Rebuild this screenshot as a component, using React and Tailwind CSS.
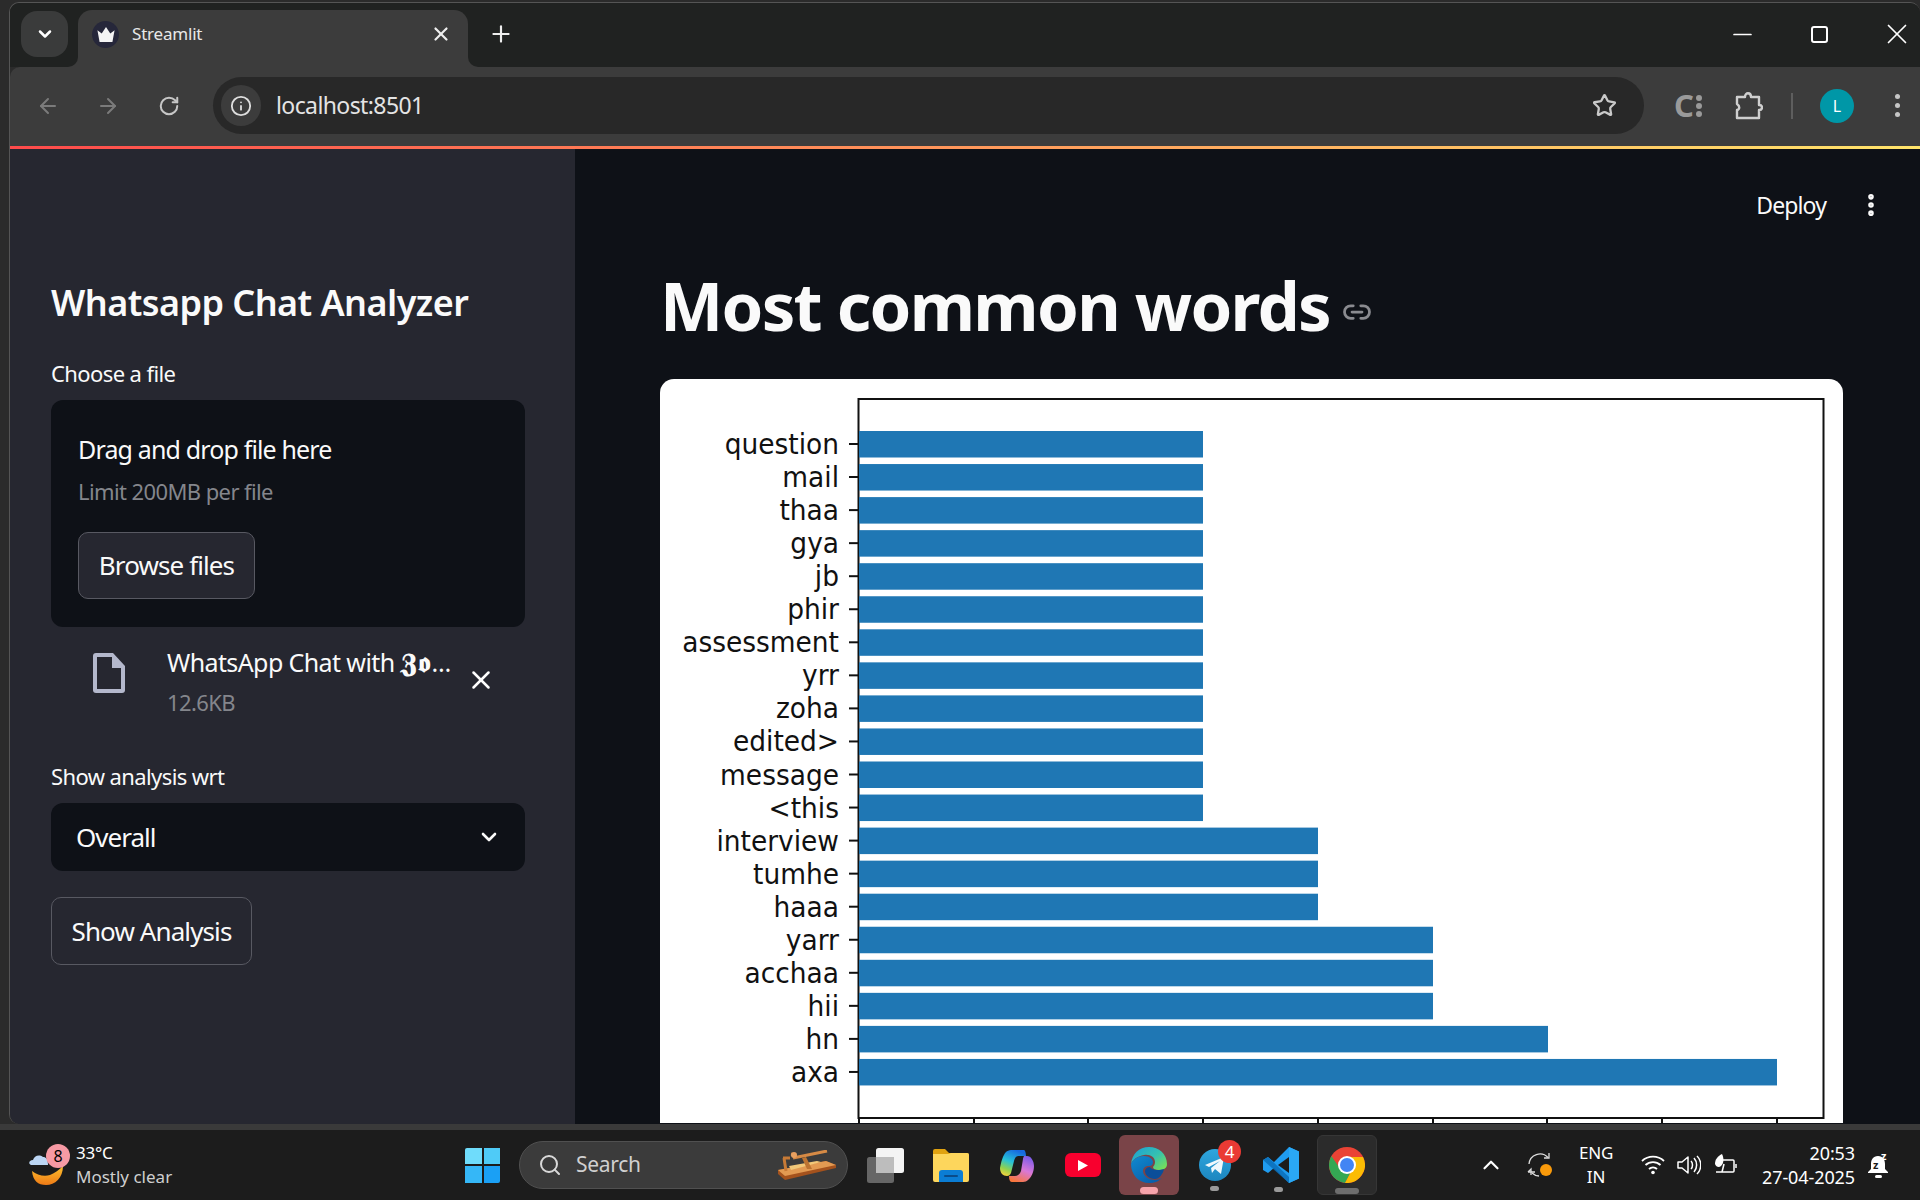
import { ArrowLeft, ArrowRight, RotateCw, Info, Star, X, Plus, ChevronDown, Minus, Link2, EllipsisVertical, Search, ChevronUp } from "lucide-react";

const words = [
  ["question", 344], ["mail", 344], ["thaa", 344], ["gya", 344], ["jb", 344],
  ["phir", 344], ["assessment", 344], ["yrr", 344], ["zoha", 344], ["edited>", 344],
  ["message", 344], ["<this", 344], ["interview", 459], ["tumhe", 459], ["haaa", 459],
  ["yarr", 574], ["acchaa", 574], ["hii", 574], ["hn", 689], ["axa", 918],
];

const Chart = () => (
  <svg width="1183" height="744" className="block">
    <rect x="198.5" y="20" width="965" height="719" fill="none" stroke="#111" strokeWidth="2" />
    {words.map(([word, w], i) => {
      const y = 52 + i * 33.05;
      return (
        <g key={word}>
          <rect x="199" y={y} width={w} height="26.5" fill="#1f77b4" />
          <line x1="189" x2="198" y1={y + 13} y2={y + 13} stroke="#111" strokeWidth="2" />
          <text
            transform={`translate(179 ${y + 23}) scale(0.945 1)`}
            textAnchor="end"
            fontFamily="DejaVu Sans"
            fontSize="28"
            fill="#111"
          >
            {word}
          </text>
        </g>
      );
    })}
    {[199, 314, 428, 543, 658, 773, 887, 1002, 1117].map((x) => (
      <line key={x} x1={x} x2={x} y1="739" y2="744" stroke="#111" strokeWidth="2" />
    ))}
  </svg>
);

const TabStrip = () => (
  <div className="h-[64px] flex items-start bg-[#202221] relative shrink-0">
    <div className="mt-[8px] ml-[11px] w-[47px] h-[46px] rounded-2xl bg-[#3a3b3b] flex items-center justify-center">
      <ChevronDown size={20} strokeWidth={3} color="#fff" />
    </div>
    <div className="mt-[7px] ml-[10px] w-[390px] h-[57px] rounded-t-[14px] bg-[#3c3c3c] flex items-center pl-[14px] pr-[18px] relative">
      <span className="absolute -left-[10px] bottom-0 w-[10px] h-[10px] bg-[#3c3c3c]">
        <span className="block w-full h-full bg-[#202221] rounded-br-[10px]" />
      </span>
      <span className="absolute -right-[10px] bottom-0 w-[10px] h-[10px] bg-[#3c3c3c]">
        <span className="block w-full h-full bg-[#202221] rounded-bl-[10px]" />
      </span>
      <div className="-mt-[9px] w-[27px] h-[27px] rounded-full bg-[#26273a] flex items-center justify-center">
        <svg width="20" height="15" viewBox="0 0 18 14">
          <path d="M1 3l4 3 4-6 4 6 4-3-2 11H3z" fill="#f4f4f4" />
        </svg>
      </div>
      <span className="-mt-[9px] ml-[13px] text-[17px] text-[#e8e8e8] tracking-[-0.2px] flex-1">Streamlit</span>
      <X size={22} strokeWidth={2.4} color="#eee" className="-mt-[9px] -mr-[2px]" />
    </div>
    <Plus size={26} strokeWidth={2} color="#eee" className="ml-[20px] mt-[18px]" />
    <div className="ml-auto flex items-center h-[34px] mt-[14px] mr-[6px]">
      <Minus size={29} strokeWidth={1.4} color="#fff" />
      <div className="ml-[54px] w-[17px] h-[17px] border-2 border-white rounded-[3px]" />
      <X size={34} strokeWidth={1.2} color="#fff" className="ml-[52px]" />
    </div>
  </div>
);

const Toolbar = () => (
  <div className="h-[79px] bg-[#3c3c3c] rounded-tl-[10px] flex items-center pb-[2px] shrink-0">
    <ArrowLeft size={24} color="#7b7b7b" className="ml-[26px]" />
    <ArrowRight size={24} color="#7b7b7b" className="ml-[36px]" />
    <RotateCw size={22} strokeWidth={2.2} color="#c6c6c6" className="ml-[38px]" />
    <div className="ml-[33px] w-[1431px] h-[57px] rounded-full bg-[#282828] flex items-center pl-[8px] pr-[27px]">
      <div className="w-[40px] h-[41px] rounded-full bg-[#3c3c3c] flex items-center justify-center">
        <Info size={22} color="#ddd" />
      </div>
      <span className="ml-[15px] text-[23px] text-[#e4e4e4] tracking-[-0.6px] flex-1">localhost:8501</span>
      <Star size={25} strokeWidth={2.2} color="#c9c9c9" />
    </div>
    <span className="ml-[30px] text-[31px] font-bold text-[#9a9a9a] leading-none">C</span>
    <div className="ml-[2px] flex flex-col gap-[2px]">
      <span className="w-[6px] h-[6px] rounded-full bg-[#9a9a9a]" />
      <span className="w-[6px] h-[6px] rounded-full bg-[#9a9a9a]" />
      <span className="w-[6px] h-[6px] rounded-full bg-[#9a9a9a]" />
    </div>
    <svg width="28" height="28" viewBox="0 0 28 28" className="ml-[33px]" fill="none" stroke="#cfcfcf" strokeWidth="2.4">
      <path d="M2 5h8c0-5 6-5 6 0h8v8c4 0 4 5 0 5v8H2v-8c3-1 3-4 0-6z" strokeLinejoin="round" />
    </svg>
    <span className="ml-[28px] w-[2px] h-[26px] bg-[#5e5e5e]" />
    <div className="ml-[27px] w-[34px] h-[34px] rounded-full bg-[#0097a7] flex items-center justify-center text-[16px] text-white">L</div>
    <div className="ml-[41px] flex flex-col gap-[4px]">
      <span className="w-[5px] h-[5px] rounded-full bg-[#c6c6c6]" />
      <span className="w-[5px] h-[5px] rounded-full bg-[#c6c6c6]" />
      <span className="w-[5px] h-[5px] rounded-full bg-[#c6c6c6]" />
    </div>
  </div>
);

const Sidebar = () => (
  <div className="w-[565px] h-full bg-[#262730] shrink-0 pl-[41px] pr-[50px] pt-[131px] text-[#fafafa]">
    <h2 className="text-[36px] font-semibold leading-[46px] tracking-[-0.55px]">Whatsapp Chat Analyzer</h2>
    <p className="mt-[32px] text-[22px] leading-[30px] tracking-[-0.6px]">Choose a file</p>
    <div className="mt-[12px] h-[227px] rounded-xl bg-[#0e1117] pl-[27px] pt-[30px]">
      <p className="text-[25px] leading-[38px] tracking-[-0.85px]">Drag and drop file here</p>
      <p className="mt-[8px] text-[22px] leading-[30px] text-[#84868c] tracking-[-0.6px]">Limit 200MB per file</p>
      <button className="mt-[26px] w-[177px] h-[67px] rounded-[10px] border border-[#585962] bg-[#262730] text-[26px] tracking-[-0.9px]">Browse files</button>
    </div>
    <div className="mt-[18px] h-[88px] flex items-start">
      <svg width="32" height="40" viewBox="0 0 32 40" className="ml-[42px] mt-[8px]">
        <path d="M3 0h17l12 13v24a3 3 0 0 1-3 3H3a3 3 0 0 1-3-3V3a3 3 0 0 1 3-3z" fill="#b4b8cc" />
        <path d="M4 4h15v11h9v21H4z" fill="#262730" />
      </svg>
      <div className="ml-[42px] w-[298px]">
        <p className="text-[25px] leading-[34px] whitespace-nowrap tracking-[-0.6px]">
          WhatsApp Chat with <span className="font-bold text-[27px] tracking-[1px]">𝖅𝖔</span><span className="tracking-[2.5px]">…</span>
        </p>
        <p className="mt-[8px] text-[22px] leading-[30px] text-[#84868c] tracking-[-0.6px]">12.6KB</p>
      </div>
      <X size={30} strokeWidth={2} color="#fff" className="mt-[20px] ml-[1px]" />
    </div>
    <p className="mt-[28px] text-[22px] leading-[30px] tracking-[-0.6px]">Show analysis wrt</p>
    <div className="mt-[12px] h-[68px] rounded-xl bg-[#0e1117] flex items-center justify-between pl-[25px] pr-[24px]">
      <span className="text-[26px] tracking-[-1px]">Overall</span>
      <ChevronDown size={24} strokeWidth={2.6} />
    </div>
    <button className="mt-[26px] w-[201px] h-[68px] rounded-[10px] border border-[#585962] text-[26px] tracking-[-0.9px]">Show Analysis</button>
  </div>
);

const Main = () => (
  <div className="flex-1 h-full bg-[#0e1117] overflow-hidden text-[#fafafa]">
    <div className="h-[83px] pt-[41px] flex justify-end pr-[35px]">
      <div className="h-[30px] flex items-center">
        <span className="text-[23px] leading-[30px] tracking-[-0.9px]">Deploy</span>
        <EllipsisVertical size={28} strokeWidth={2.8} className="ml-[31px]" />
      </div>
    </div>
    <div className="ml-[85px] flex items-center h-[147px]">
      <h1 className="text-[67px] font-bold leading-none tracking-[-1.7px]">Most common words</h1>
      <Link2 size={30} strokeWidth={2.2} color="#8a8b90" className="ml-[12px] mt-[12px]" />
    </div>
    <div className="ml-[85px] w-[1183px] bg-white rounded-t-[14px] overflow-hidden">
      <Chart />
    </div>
  </div>
);

const TaskIcons = () => (
  <div className="flex items-center h-[70px]">
    <svg width="37" height="35" viewBox="0 0 37 35" className="ml-[19px]">
      <rect x="0" y="9" width="27" height="26" rx="2.5" fill="#666" />
      <rect x="9" y="0" width="28" height="25" rx="2.5" fill="#f4f4f4" />
      <rect x="9" y="9" width="18" height="16" fill="#bdbdbd" />
    </svg>
    <svg width="36" height="33" viewBox="0 0 36 33" className="ml-[29px]">
      <path d="M0 2a2 2 0 0 1 2-2h10l4 4h18a2 2 0 0 1 2 2v6H0z" fill="#e0a210" />
      <path d="M0 5h15l3-1h16a2 2 0 0 1 2 2v25a2 2 0 0 1-2 2H2a2 2 0 0 1-2-2z" fill="#fdd65c" />
      <path d="M6 33V24a3 3 0 0 1 3-3h18a3 3 0 0 1 3 3v9z" fill="#0b7dd4" />
      <rect x="11" y="26" width="14" height="2" rx="1" fill="#0a4c8a" />
    </svg>
    <svg width="34" height="33" viewBox="0 0 34 33" className="ml-[31px]">
      <defs>
        <linearGradient id="copA" x1="0.6" y1="0" x2="0.2" y2="1">
          <stop offset="0" stopColor="#1769e0" />
          <stop offset="0.45" stopColor="#26c2d8" />
          <stop offset="0.75" stopColor="#8fd14f" />
          <stop offset="1" stopColor="#f7d13c" />
        </linearGradient>
        <linearGradient id="copB" x1="0.7" y1="0" x2="0.3" y2="1">
          <stop offset="0" stopColor="#7c5ce8" />
          <stop offset="0.5" stopColor="#d878d8" />
          <stop offset="1" stopColor="#f8763c" />
        </linearGradient>
      </defs>
      <path d="M11 1h13c1 0 2 3 2 6H19c-3 0-4 2-5 5l-3 12c-1 2-2 3-4 3-4 0-7-3-7-8 1-6 3-13 6-16 1-1 3-2 5-2z" fill="url(#copA)" />
      <path d="M24 7h3c4 0 7 5 7 10 0 6-3 12-6 14-1 1-3 2-5 2H12c-2 0-3-2-3-6h6c3 0 5-2 6-5l2-12c0-1 1-3 1-3z" fill="url(#copB)" />
    </svg>
    <div className="ml-[31px] w-[36px] h-[24px] rounded-[6px] bg-[#f8002e] flex items-center justify-center">
      <svg width="10" height="11" viewBox="0 0 10 11"><path d="M0 0l10 5.500-10 5.500z" fill="#fff" /></svg>
    </div>
    <div className="ml-[18px] w-[60px] h-[60px] rounded-[6px] bg-[#7a4448] relative flex items-center justify-center">
      <svg width="36" height="36" viewBox="0 0 36 36">
        <defs>
          <linearGradient id="edgeA" x1="0" y1="0" x2="1" y2="0.8">
            <stop offset="0" stopColor="#1a9ed8" />
            <stop offset="0.6" stopColor="#35c1b0" />
            <stop offset="1" stopColor="#74dc5c" />
          </linearGradient>
          <linearGradient id="edgeB" x1="0" y1="0" x2="0.8" y2="1">
            <stop offset="0" stopColor="#0f8ad0" />
            <stop offset="1" stopColor="#0a5ca8" />
          </linearGradient>
        </defs>
        <path d="M0 17C1 7 8 0 18 0c10 0 18 7 18 17 0 4-3 6-8 6-4 0-6-1-6-3 1-1 2-3 2-5 0-5-5-8-11-7C7 9 2 12 0 17z" fill="url(#edgeA)" />
        <path d="M0 17c2-5 7-8 13-8 5 0 9 3 9 6 0 2-1 4-4 4-4 0-6 2-6 5 0 5 6 9 12 9 3 0 5-1 7-2-3 3-7 5-13 5C8 36 0 28 0 17z" fill="url(#edgeB)" />
        <path d="M14 24c0-2 2-4 5-4 1 1 2 3 9 3 2 0 4-1 5-1-1 5-5 10-9 10-6 0-10-4-10-8z" fill="#0a4e9a" />
      </svg>
      <span className="absolute bottom-[1px] left-[21px] w-[18px] h-[7px] rounded-full bg-[#f7a3ab]" />
    </div>
    <div className="ml-[20px] w-[32px] h-[31px] relative -mt-[1px]">
      <div className="w-[32px] h-[32px] rounded-full bg-[linear-gradient(180deg,#2fa6de,#1c86bf)] flex items-center justify-center">
        <svg width="20" height="17" viewBox="0 0 20 17"><path d="M0 8L19 0 16 17 10 12 7 16 6 11 15 4 4 10z" fill="#f0f8fc" /></svg>
      </div>
      <span className="absolute left-[19px] -top-[9px] w-[23px] h-[23px] rounded-full bg-[#ea3a34] text-[17px] text-white flex items-center justify-center">4</span>
      <span className="absolute left-[11px] top-[37px] w-[9px] h-[5px] rounded-full bg-[#9a9a9a]" />
    </div>
    <div className="ml-[32px] w-[36px] h-[36px] relative">
      <svg width="36" height="36" viewBox="0 0 36 36">
        <path d="M26 0l10 4.500v27L26 36 11 21l-6 5-5-3v-10l5-3 6 5z" fill="#1f9cf0" />
        <path d="M26 0v36l10-4.500v-27z" fill="#2aa8f5" />
        <path d="M26 10L15 18l11 8z" fill="#1c1c1c" />
        <path d="M0 13l5-3 21 20v6z" fill="#0a6fb8" fillOpacity="0.85" />
      </svg>
      <span className="absolute left-[11px] top-[40px] w-[9px] h-[5px] rounded-full bg-[#9a9a9a]" />
    </div>
    <div className="ml-[18px] w-[60px] h-[60px] rounded-[6px] bg-[#2b2b2b] border border-[#363636] relative flex items-center justify-center">
      <svg width="36" height="36" viewBox="0 0 36 36">
        <circle cx="18" cy="18" r="18" fill="#ea4335" />
        <path d="M2.400 9A18 18 0 0 0 16 35.900L24 21z" fill="#34a853" />
        <path d="M18 10h16a18 18 0 0 1-18 25.900L24 21z" fill="#fbbc04" />
        <path d="M2.400 9L12 23l6-13z" fill="#ea4335" />
        <circle cx="18" cy="18" r="9" fill="#fff" />
        <circle cx="18" cy="18" r="7" fill="#4285f4" />
      </svg>
      <span className="absolute bottom-[0px] left-[17px] w-[24px] h-[6px] rounded-full bg-[#6e6e6e]" />
    </div>
  </div>
);

const Taskbar = () => (
  <div className="h-[70px] bg-[#1c1c1c] flex items-center shrink-0 relative">
    <div className="ml-[29px] w-[40px] h-[42px] relative">
      <svg width="40" height="42" viewBox="0 0 40 42">
        <defs>
          <linearGradient id="moon" x1="0" y1="0" x2="0" y2="1">
            <stop offset="0" stopColor="#fcc02e" />
            <stop offset="1" stopColor="#ee7a16" />
          </linearGradient>
        </defs>
        <path d="M34 22c0 12-8 19-17 19-8 0-13-4-14-14 5 4 12 6 18 4 5-2 9-5 13-9z" fill="url(#moon)" />
        <path d="M2 21c-3-1-2-5 2-5 1-4 6-6 10-3 3 0 5 2 5 8z" fill="#bcd6f4" />
      </svg>
      <span className="absolute left-[17px] top-0 w-[24px] h-[24px] rounded-full bg-[#f79aa4] text-[16px] text-black flex items-center justify-center">8</span>
    </div>
    <div className="ml-[7px] w-[389px] text-white">
      <p className="text-[17px] leading-[24px] tracking-[-0.2px]">33°C</p>
      <p className="text-[17px] leading-[24px] text-[#cfcfcf] tracking-[0px]">Mostly clear</p>
    </div>
    <div className="grid grid-cols-2 gap-[2px] w-[35px] h-[35px]">
      <span className="bg-[#6fdcfb] rounded-tl-[2px]" />
      <span className="bg-[#4fcbf7]" />
      <span className="bg-[#35b7f7]" />
      <span className="bg-[#1aa0f5] rounded-br-[2px]" />
    </div>
    <div className="ml-[19px] w-[329px] h-[48px] rounded-full bg-[#3b3b3b] border border-[#505050] flex items-center pl-[18px] pr-[10px]">
      <Search size={24} strokeWidth={2} color="#d9d9d9" />
      <span className="ml-[14px] text-[21px] text-[#d0d0d0] tracking-[-0.3px] flex-1">Search</span>
      <svg width="60" height="30" viewBox="0 0 60 30">
        <path d="M1 20l48-9 10 4v3L8 30 1 24z" fill="#a4521d" />
        <path d="M1 20l48-9 10 4L8 26z" fill="#e29a52" />
        <path d="M14 20l30-8-4-1-28 5z" fill="#f2c879" />
        <path d="M6 8h7M7 8l2 13M14 4l5 1" stroke="#c77a36" strokeWidth="3" fill="none" />
        <path d="M16 8L50 1" stroke="#d68a45" strokeWidth="3" fill="none" />
        <circle cx="17" cy="5" r="3" fill="#e8a060" />
        <path d="M25 8l5 11h5L29 7z" fill="#bd7432" />
      </svg>
    </div>
    <TaskIcons />
    <ChevronUp size={26} strokeWidth={2} color="#fff" className="ml-[101px]" />
    <svg width="26" height="26" viewBox="0 0 26 26" fill="none" stroke="#ddd" strokeWidth="1.300" className="ml-[23px]">
      <path d="M2 12a11 11 0 0 1 19-6.500" />
      <path d="M22 1v5h-5" />
      <path d="M1 20l3-3v6M1 20h7" />
      <path d="M5 21a11 11 0 0 0 7 3" />
      <circle cx="19" cy="18" r="6" fill="#f99a0b" stroke="none" />
    </svg>
    <div className="ml-[23px] w-[40px] text-center text-[17px] leading-[24px] text-white tracking-[-0.2px]">
      <p>ENG</p>
      <p>IN</p>
    </div>
    <svg width="24" height="20" viewBox="0 0 24 20" fill="none" stroke="#fff" strokeWidth="1.800" className="ml-[25px]">
      <path d="M1 6a16 16 0 0 1 22 0" />
      <path d="M4.500 10a11 11 0 0 1 15 0" />
      <path d="M8 14a6 6 0 0 1 8 0" />
      <circle cx="12" cy="17.500" r="1.800" fill="#fff" stroke="none" />
    </svg>
    <svg width="24" height="20" viewBox="0 0 24 20" fill="none" stroke="#fff" strokeWidth="1.500" className="ml-[12px]">
      <path d="M1 7h4l6-5v16l-6-5H1z" strokeLinejoin="round" />
      <path d="M14 6c2 2 2 6 0 8" />
      <path d="M17 3c3.500 4 3.500 10 0 14" />
      <path d="M20 1c5 5 5 13 0 18" />
    </svg>
    <svg width="24" height="24" viewBox="0 0 24 24" fill="none" stroke="#fff" strokeWidth="1.500" className="ml-[12px]">
      <path d="M9 7h11a1 1 0 0 1 1 1v10a1 1 0 0 1-1 1H3" />
      <path d="M23 11v4" />
      <path d="M2 11c0-5 3-8 7-10 2 4 2 9-1 12-2 2-5 1-6-2z" fill="#fff" stroke="none" />
      <path d="M9 19l2-8" />
    </svg>
    <div className="ml-auto text-right text-[18px] leading-[24px] text-white tracking-[-0.1px]">
      <p>20:53</p>
      <p>27-04-2025</p>
    </div>
    <div className="ml-[13px] mr-[31px] w-[21px] h-[26px] relative">
      <svg width="21" height="26" viewBox="0 0 21 26">
        <path d="M10 4C5 4 3 8 3 12v5l-3 3v1h20v-1l-3-3v-5c0-4-2-8-7-8z" fill="#fff" />
        <rect x="7" y="23" width="7" height="3" rx="1.500" fill="#fff" />
      </svg>
      <span className="absolute left-[5px] top-[7px] text-[11px] leading-[11px] font-bold text-[#1c1c1c]">z</span>
      <span className="absolute left-[13px] -top-[2px] text-[11px] leading-[11px] font-bold text-white">z</span>
    </div>
  </div>
);

export default function App() {
  return (
    <div
      className="w-[1920px] h-[1200px] flex flex-col overflow-hidden bg-[#2b2b2b]"
      style={{ fontFamily: '"Noto Sans", sans-serif' }}
    >
      <div className="h-[1122px] ml-[9px] mt-[2px] rounded-t-[10px] rounded-bl-[10px] border-l border-t border-[#555] flex flex-col overflow-hidden shrink-0">
        <TabStrip />
        <Toolbar />
        <div className="h-[3px] shrink-0 bg-[linear-gradient(90deg,#ff4b4b,#ffe46b)]" />
        <div className="flex-1 min-h-0 flex">
          <Sidebar />
          <Main />
        </div>
      </div>
      <div className="h-[6px] bg-[#3a3a3a] shrink-0" />
      <Taskbar />
    </div>
  );
}
